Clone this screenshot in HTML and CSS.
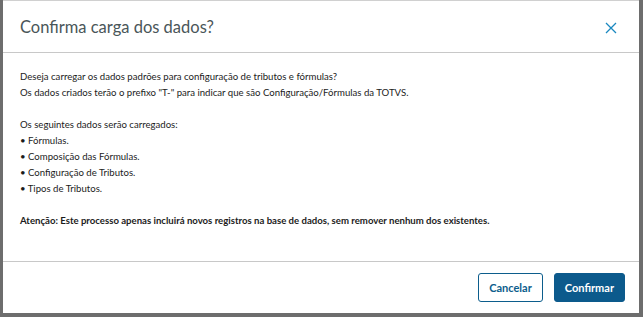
FILE: index.html
```html
<!DOCTYPE html>
<html lang="pt-BR">
<head>
  <meta charset="UTF-8" />
  <title>Confirma carga dos dados?</title>
  <link rel="stylesheet" href="styles.css">
</head>
<body>
  <div class="modal">
    <div class="modal-header">
      <h2>Confirma carga dos dados?</h2>
      <button class="close" aria-label="Fechar">
        <svg width="12" height="12" viewBox="0 0 12 12"><path d="M1 1 L11 11 M11 1 L1 11" stroke="#1a88c0" stroke-width="1.3" fill="none"/></svg>
      </button>
    </div>
    <div class="modal-body">
      <p>Deseja carregar os dados padrões para configuração de tributos e fórmulas?<br>
      Os dados criados terão o prefixo "T-" para indicar que são Configuração/Fórmulas da TOTVS.</p>
      <p>Os seguintes dados serão carregados:<br>
      • Fórmulas.<br>
      • Composição das Fórmulas.<br>
      • Configuração de Tributos.<br>
      • Tipos de Tributos.</p>
      <p class="warn">Atenção: Este processo apenas incluirá novos registros na base de dados, sem remover nenhum dos existentes.</p>
    </div>
    <div class="modal-footer">
      <button class="btn btn-outline">Cancelar</button>
      <button class="btn btn-primary">Confirmar</button>
    </div>
  </div>
</body>
</html>
```

FILE: styles.css
```css
body {
  margin: 0;
  height: 317px;
  background: #6d6d6d;
  font-family: 'Lato', sans-serif;
  overflow: hidden;
}

.modal {
  margin-left: 3px;
  width: 636px;
  height: 313px;
  background: #fff;
  border-top: 1px solid #d0d0d0;
  box-sizing: border-box;
  display: flex;
  flex-direction: column;
}

.modal-header {
  height: 51px;
  display: flex;
  align-items: center;
  justify-content: space-between;
  padding: 0 22px 0 17px;
  border-bottom: 1px solid #c8c8c8;
}

.modal-header h2 {
  margin: 0;
  font-size: 16.5px;
  font-weight: 400;
  color: #4a5659;
}

.close {
  background: none;
  border: none;
  padding: 0;
  display: flex;
  margin-top: 2px;
}

.modal-body {
  flex: 1;
  padding: 16px 17px 0;
  font-size: 9.6px;
  line-height: 16px;
  color: #1c1c1c;
}

.modal-body p {
  margin: 0 0 16px;
}

.warn {
  font-weight: 700;
}

.modal-footer {
  height: 51px;
  border-top: 1px solid #c8c8c8;
  display: flex;
  align-items: center;
  justify-content: flex-end;
  gap: 11px;
  padding: 0 14px 0 0;
}

.btn {
  height: 29px;
  border-radius: 3px;
  font-family: 'Lato', sans-serif;
  font-size: 11px;
  font-weight: 700;
  padding: 0 10px;
}

.btn-outline {
  background: #fff;
  border: 1px solid #0c5d8c;
  color: #0c5d8c;
}

.btn-primary {
  background: #0c5a8c;
  border: 1px solid #0c5a8c;
  color: #fff;
}
```
